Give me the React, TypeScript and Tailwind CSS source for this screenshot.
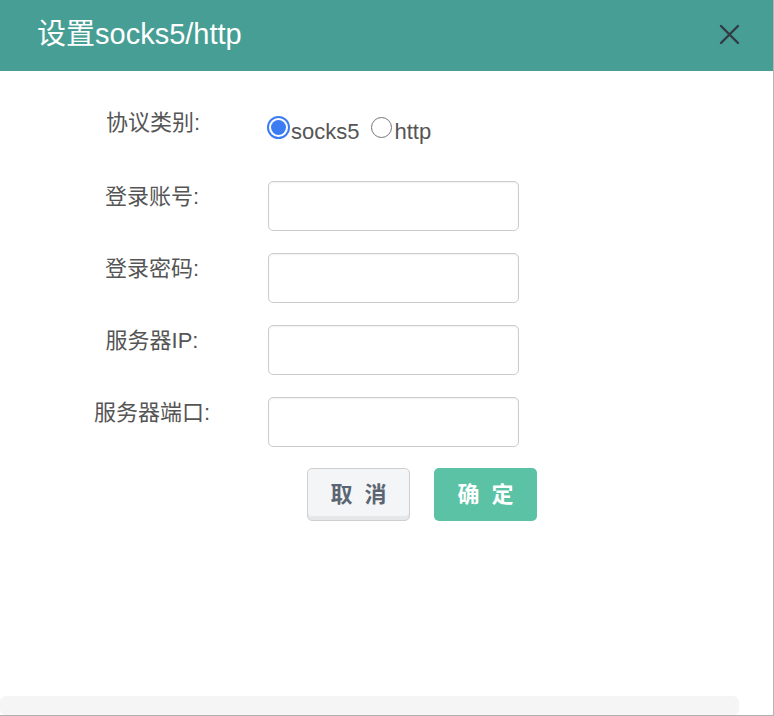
import { useState } from "react";

const FONT = "font-['Liberation_Sans','Noto_Sans_CJK_SC',sans-serif]";

const FIELDS: { label: string; type: string }[] = [
    { label: "登录账号:", type: "text" },
    { label: "登录密码:", type: "password" },
    { label: "服务器IP:", type: "text" },
    { label: "服务器端口:", type: "text" },
];

function Radio({ checked, label, onClick }: { checked: boolean; label: string; onClick: () => void }) {
    return (
        <label className="flex items-start cursor-pointer" onClick={onClick}>
            {checked ? (
                <span className="w-[23px] h-[23px] rounded-full border-[2px] border-[#3b7cf2] flex items-center justify-center">
                    <span className="w-[15px] h-[15px] rounded-full bg-[#3b7cf2]"></span>
                </span>
            ) : (
                <span className="mt-[1px] mx-[1px] w-[21px] h-[21px] rounded-full border border-[#767676] bg-white"></span>
            )}
            <span className="text-[22px] leading-[22px] text-[#555] mt-[5px] ml-[1px]">{label}</span>
        </label>
    );
}

export default function App() {
    const [proto, setProto] = useState("socks5");

    return (
        <div className={`relative w-[774px] h-[716px] bg-white border-r border-r-[#b5b5b5] border-b border-b-[#b0b0b0] overflow-hidden ${FONT}`}>
            <div className="h-[71px] bg-[#479e94] flex items-center justify-between pl-[37px] pr-[33px]">
                <div className="text-white text-[29px] leading-none -mt-[3px]">设置socks5/http</div>
                <svg width="21" height="21" viewBox="0 0 21 21" className="-mt-[2px]">
                    <path d="M2 2L19 19M19 2L2 19" stroke="#333b46" strokeWidth="2.4" strokeLinecap="round" />
                </svg>
            </div>

            <div className="pt-[38px]">
                <div className="flex items-start">
                    <div className="w-[200px] ml-[53px] text-center text-[22px] leading-[28px] text-[#555]">协议类别:</div>
                    <div className="ml-[14px] flex items-start gap-[11px] pt-[7px]">
                        <Radio checked={proto === "socks5"} label="socks5" onClick={() => setProto("socks5")} />
                        <Radio checked={proto === "http"} label="http" onClick={() => setProto("http")} />
                    </div>
                </div>

                <div className="mt-[38px] flex flex-col gap-[22px]">
                    {FIELDS.map((f) => (
                        <div key={f.label} className="flex items-start">
                            <div className="w-[200px] ml-[52px] text-center text-[22px] leading-[28px] text-[#555] pt-[2px]">{f.label}</div>
                            <input
                                type={f.type}
                                className="ml-[16px] w-[251px] h-[50px] border border-[#cccccc] rounded-[5px] px-2 text-[16px] outline-none shadow-[inset_0_1px_2px_rgba(0,0,0,0.06)]"
                            />
                        </div>
                    ))}
                </div>

                <div className="mt-[21px] ml-[307px] flex gap-[24px]">
                    <button className="w-[103px] h-[53px] rounded-[5px] border border-[#cfcfcf] bg-[#f4f5f7] shadow-[inset_0_-4px_0_#e6e7e9] text-[#5b6573] text-[22px] font-bold tracking-[12px] pl-[12px]">
                        取消
                    </button>
                    <button className="w-[103px] h-[53px] rounded-[5px] bg-[#5bc2a6] text-white text-[22px] font-bold tracking-[12px] pl-[12px]">
                        确定
                    </button>
                </div>
            </div>

            <div className="absolute left-0 bottom-0 w-[739px] h-[19px] rounded-[6px] bg-[#f4f5f4]"></div>
        </div>
    );
}
